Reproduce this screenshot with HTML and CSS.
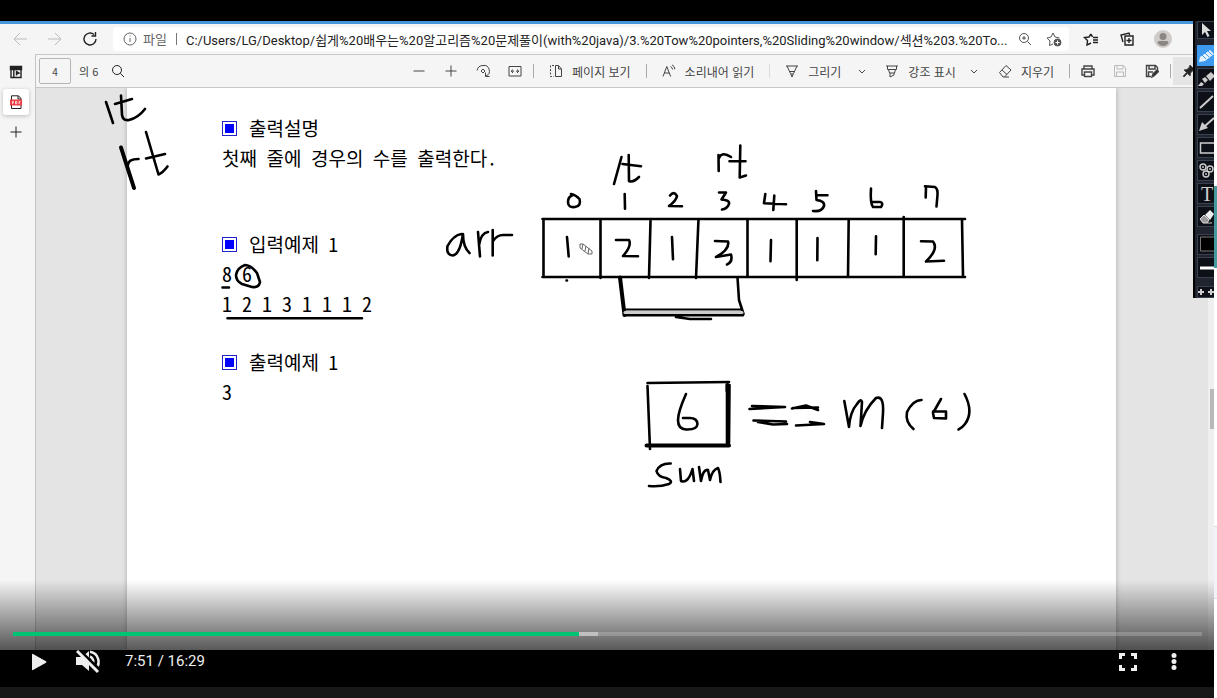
FILE: index.html
```html
<!DOCTYPE html>
<html lang="ko">
<head>
<meta charset="utf-8">
<meta name="viewport" content="width=device-width, initial-scale=1">
<title>강의 플레이어</title>
<link rel="stylesheet" href="styles.css">
</head>
<body>
<main class="layout">
  <section class="player">
    <div class="stage">
      <div class="letterbox"></div>
      <div class="browser">
        <header class="navbar">
          <button class="nav-btn faded" aria-label="뒤로"><svg viewBox="0 0 16 16"><path d="M15 8H2M8 2 2 8l6 6"/></svg></button>
          <button class="nav-btn faded" aria-label="앞으로"><svg viewBox="0 0 16 16"><path d="M1 8h13M8 2l6 6-6 6"/></svg></button>
          <button class="nav-btn" aria-label="새로 고침"><svg viewBox="0 0 16 16" class="bold"><path d="M14 8a6 6 0 1 1-2-4.500M13.500 1v4h-4"/></svg></button>
          <div class="address">
            <svg class="icon info" viewBox="0 0 16 16"><circle cx="8" cy="8" r="6"/><path d="M8 7v4M8 4.500v1"/></svg>
            <label class="scheme" for="url">파일</label>
            <span class="bar"></span>
            <input id="url" class="url" type="text" value="C:/Users/LG/Desktop/쉽게%20배우는%20알고리즘%20문제풀이(with%20java)/3.%20Tow%20pointers,%20Sliding%20window/섹션%203.%20To...">
            <button class="addr-btn" aria-label="확대"><svg viewBox="0 0 16 16"><circle cx="7" cy="7" r="4.500"/><path d="M10.500 10.500 14 14M7 5v4M5 7h4"/></svg></button>
            <button class="addr-btn" aria-label="즐겨찾기 추가"><svg viewBox="0 0 16 16"><path d="M7 13l-3.500 1.500.5-4.500L1 7l4-1 2-4 2 4 4.500 1"/><circle cx="11.500" cy="11.500" r="3.500" fill="#555"/><path d="M11.500 9.500v4M9.500 11.500h4" stroke="#fff"/></svg></button>
          </div>
          <button class="side-btn" aria-label="즐겨찾기"><svg viewBox="0 0 16 16" class="bold"><path d="M8 3 6 6 1.500 6.500l3 3-.5 4.500L8 12M8 3l1.500 3M10 6.500h5M10 9h5M10 11.500h5"/></svg></button>
          <button class="side-btn" aria-label="컬렉션"><svg viewBox="0 0 16 16" class="bold"><path d="M6 5h8v9H6zM10 7v5M7.500 9.500h5M4 11 2 4l8-2 .6 2"/></svg></button>
          <button class="side-btn avatar" aria-label="프로필"><svg viewBox="0 0 18 18"><circle cx="9" cy="9" r="9" fill="#cfcbc8" stroke="none"/><circle cx="9" cy="6.500" r="3.500" fill="#8b8784" stroke="none"/><path d="M3.500 13q0-2 2-2h7q2 0 2 2-2 3-5.500 3t-5.500-3z" fill="#8b8784" stroke="none"/></svg></button>
        </header>
        <div class="workspace">
          <nav class="tabs">
            <button class="tab" aria-label="탭 메뉴"><svg viewBox="0 0 14 14" class="bold"><path d="M2 3h10v9.500H2zM4.800 5v7"/><path d="M1.500 1.500h11v3h-11z" fill="#222"/><path d="M7.500 10.500V6.500l2.500 1.500-2.500 1"/></svg></button>
            <button class="tab current" aria-label="PDF 문서"><svg viewBox="0 0 14 14"><path d="M2.500 13.500V.8h7L12 3.500v10zM9 1v3h3" stroke="#222"/><path d="M1 4.500h12v6H1z" fill="#ee3f46" stroke="none"/><path d="M3.500 9V6.500h1v1.200h-1M6.500 6.300v2.500h1.300V6.300zM10 9V6.500h1.500M10 7.800h1" stroke="#fff" stroke-width=".7"/></svg></button>
            <button class="tab" aria-label="새 탭"><svg viewBox="0 0 14 14"><path d="M7 1.500v11M1.500 7h11"/></svg></button>
          </nav>
          <div class="viewer">
            <div class="toolbar">
              <div class="tool-start">
                <input class="page-no" type="text" value="4" aria-label="페이지">
                <span class="page-total">의 6</span>
                <button class="search" aria-label="찾기"><svg viewBox="0 0 14 14"><circle cx="6" cy="6" r="4.500"/><path d="M9.300 9.300 13 13"/></svg></button>
              </div>
              <div class="tool-zoom">
                <button class="tool" aria-label="축소"><svg viewBox="0 0 14 14"><path d="M1.500 7h11"/></svg></button>
                <button class="tool" aria-label="확대"><svg viewBox="0 0 14 14"><path d="M1.500 7h11M7 1.500v11"/></svg></button>
                <button class="tool" aria-label="회전"><svg viewBox="0 0 14 14"><path d="M1 6.500Q2 1.500 7 1.500a5.500 5.500 0 0 1 3 10.500M9.500 8.500v4h4M7 5 9 7 7 9 5 7z"/></svg></button>
                <button class="tool" aria-label="너비에 맞춤"><svg viewBox="0 0 14 14"><path d="M1 2.500h12v9.500H1zM3 7.200h3M5 5.500 3.200 7.200 5 9M11 7.200H8M9 5.500l1.800 1.700L9 9"/></svg></button>
              </div>
              <span class="divider"></span>
              <button class="tool-text"><svg viewBox="0 0 14 14"><path d="M6.500 1.500v11h6V5L9.500 1.500zM9.500 2v3h3"/><path d="M5 1.500H1.500v11H5" stroke-dasharray="2 1.500"/></svg>페이지 보기</button>
              <span class="divider"></span>
              <button class="tool-text"><svg viewBox="0 0 14 14"><path d="M1 12.500 4.800 2.500l3.800 10M2.300 9h5M8.500 2.500q2 1 2 3M10 .8q2.800 1.500 2.800 4.500"/></svg>소리내어 읽기</button>
              <span class="divider light"></span>
              <button class="tool-text"><svg viewBox="0 0 14 14"><path d="M1 2h12M2 2l3.500 7.500L7 13l1.500-3.500L12 2M4.500 7.500h5M6 10h2"/></svg>그리기</button>
              <button class="chevron" aria-label="그리기 옵션"><svg viewBox="0 0 8 8"><path d="M1 3l3 3 3-3"/></svg></button>
              <button class="tool-text tight"><svg viewBox="0 0 14 14"><path d="M1 2h12M2.500 2v3.500h9V2M3.500 5.500 4.500 9h5l1-3.500M5 9v4l4-2V9"/></svg>강조 표시</button>
              <button class="chevron" aria-label="강조 표시 옵션"><svg viewBox="0 0 8 8"><path d="M1 3l3 3 3-3"/></svg></button>
              <button class="tool-text"><svg viewBox="0 0 14 14"><path d="M1.500 8.500 8 1.500l5 4.500-6.500 7H5zM4 6l5 4.500M6.500 13H11"/></svg>지우기</button>
              <span class="divider"></span>
              <div class="tool-file">
                <button class="tool" aria-label="인쇄"><svg viewBox="0 0 14 14" class="bold"><path d="M3 5V2h8v3M3 11H1V5h12v6h-2M3.500 8h7v4.500h-7z"/></svg></button>
                <button class="tool faded" aria-label="저장"><svg viewBox="0 0 14 14"><path d="M1.500 1.500h9l2 2v9h-11zM4 1.500v3.500h6V1.500M3.500 12.500V8h7v4.500"/></svg></button>
                <button class="tool" aria-label="다른 이름으로 저장"><svg viewBox="0 0 14 14" class="bold"><path d="M6 12.500H1.500v-11h9l2 2V6M4 1.500v3.500h6V1.500M3.500 12V8H8"/><path d="M7 13l1-3 4-4 1.500 1.500-4 4z" fill="#222"/></svg></button>
              </div>
              <span class="divider"></span>
              <button class="pin" aria-label="도구 모음 고정"><svg viewBox="0 0 14 14"><path d="M8 1l5 5-2 .5-2.500 2.500L8 12 5.500 9.500 2 13l-.8-.8L4.500 8.500 2 6l3-.5L7.500 3z" fill="#222"/></svg></button>
            </div>
            <div class="canvas">
              <article class="paper">
                <section class="block first">
                  <h2 class="heading"><span class="mark"></span>출력설명</h2>
                  <p class="line">첫째 줄에 경우의 수를 출력한다.</p>
                </section>
                <section class="block">
                  <h2 class="heading"><span class="mark"></span>입력예제 1</h2>
                  <p class="line digits">8 6</p>
                  <p class="line digits">1 2 1 3 1 1 1 2</p>
                </section>
                <section class="block last">
                  <h2 class="heading"><span class="mark"></span>출력예제 1</h2>
                  <p class="line digits">3</p>
                </section>
              </article>
              <div class="scroll"><div class="thumb"></div></div>
            </div>
          </div>
        </div>
      </div>

      <svg class="ink" width="1214" height="650" viewBox="0 0 1214 650" role="img" aria-label="손글씨: lt, rt, arr 배열, sum == m(6)">
        <g class="pen">
          <path d="M106 102 113 123M115 104l17-5M121 95.500l1 19.500q1 6 7 5 9-2 16-11"/>
          <path class="thick" d="M121 147.500 134 188"/>
          <path d="M128 165q0-6 10.500-6"/>
          <path d="M146 132l12.500 42.500q4-1.500 9-8M146 158.500l19-4.500"/>
          <path d="M461.500 234q-8 1-14 12-1.500 9 5.500 9.500 7-1.500 10-21.500 0 13 6.500 19M478 232l2 24.500M479 245q2-12 9-13M492.700 230v25.500M493 241q4-6 10-6h9"/>
          <path d="M222.500 287.500h6.500M236 275q1-7 9-10 6 0 12 8l3 9q-1 6-8 5l-10-3q-6-3-6-9zM227.500 318.300H362"/>
          <path d="M621.500 157 614 184M628.700 155l.3 26q4 2 10-4M622.500 164l18.500 2.300"/>
          <path d="M718.700 171l-.2-16M719 158q3-7 12-1M740.300 145.500l-.6 32 6.300-2M729.500 161.300h16"/>
          <path d="M571 194q5 1 8.500 5 2 7-4.500 8-7 1-7-5 0-5 4-6.500M624.700 194l.3 14.700M670 195.500q4-5 7 .5-1 5-8 10l13 .3M719 192.500h7l-4.500 7q8.500.5 7.500 4.500-2 5-7 5.500"/>
          <path d="M765.300 194l-1.300 9.300 22 1M774.300 195.500l-1 14.500M816 191l.5 9q8.500 1 7.500 6-2 6-11 5M817 195l10.500.3M871 188.500q-1 14.500 2 18.500h8q3-4-1-5h-8M926 187l-.3 10.500M925 186.300l10 .7q3 2 2.500 8l-1 11.500"/>
          <path d="M542.500 219H965M542.500 277H965M543.500 219v58M600.500 219v59M650.500 221l-1.500 57M698.500 219l-2.500 59M747.500 219v58M796.700 219v61M848.700 219l-.7 58M903.700 217v60M962 220l1 56"/>
          <path d="M567 237l1.700 19.500M616 240h13q3 6-6 16l15 .3M672 237l1 22.300M715 241l13 .5q2 7.500-12 15.500l15-2.500q2 7.500-4 10M771 240l-.5 21.300M817.500 238l-.2 22.300M876 236.300l-.3 18M921 241.300l12 .2q6 7.500-7 20l18-.8M566.500 280.500h.5"/>
          <path class="thick" d="M620 277.500l4.500 37.500"/>
          <path d="M737.500 277.500l1.500 22.500 4.500 14"/>
          <path class="tone" d="M625 312.500h117"/>
          <path class="thin" d="M624 309.500h118"/>
          <path d="M624 315.300h119M676 317l14 2h21"/>
          <path d="M647.500 383 729 382M647.500 386l2.500 63M727 384v61M729.500 385l-.5 58"/>
          <path class="thick" d="M646.500 445.500H729M727.500 385v6"/>
          <path d="M686 394q-8 18-8 26 0 9 8 9.500 11 .5 11.500-5.500-.5-6-7.500-6h-7"/>
          <path d="M749.500 409l35.500-2-33-1M753.500 420.500l32.500 1M758 422l15 2.500 14-.5M792 408.500l14-3 12 4.500M793 408l25-.5M796 425.500l28-1.500-14-2"/>
          <path d="M844.300 401l4.700 26q1-15 8-23 4-6 5-2l-1.500 24q3.500-16 15.500-28 8-3 7 15l-1 15M921.500 400q-8.500 0-14.500 12-2 10 6.500 17M941 399l-8 14 1 5 12 .5v-7h-13M964.500 394q9.500 18 .5 30-3 4-6.500 5.500"/>
          <path d="M670.700 463.500q-10.700-.5-14.200 7.500 1.500 6 9.500 7 8 3 3 6-9 3-20 2M680 469l1 12q7 3 11.500-12l1.500 12M699 467l2 14q2-12 7-11l2 10q2-10 8-12 2 4 2.500 14"/>
        </g>
        <g class="cursor"><path d="M580 244l3 0 9 7v3l-4 0-8-6zM583 244l-1 5M586 246l-1 5M589 248l-1 6"/></g>
      </svg>

      <aside class="palette" aria-label="그리기 도구">
        <button class="pal first" aria-label="선택"><svg viewBox="0 0 20 20"><path d="M5 3v12l3-3 2.500 5 2-1-2.500-5h4z" fill="#ddd" stroke="none"/></svg></button>
        <button class="pal active" aria-label="펜"><svg viewBox="0 0 20 20"><path d="M2 16 3 11l10-7 4 4-9 7z" fill="#e6f2ff" stroke="none"/><path d="M5 9l4 4M8 7l4 4M11 5l4 4" stroke="#3d9aee"/></svg></button>
        <button class="pal" aria-label="형광펜"><svg viewBox="0 0 20 20"><path d="M9 7l5-4 4 4-5 5zM5 10l3-2 3 3-3 3zM1 17l3-4 3 2-2 2z" fill="#ccc" stroke="none"/></svg></button>
        <button class="pal" aria-label="선"><svg viewBox="0 0 20 20"><path d="M3 16 16 4" stroke-width="2"/></svg></button>
        <button class="pal" aria-label="화살표"><svg viewBox="0 0 20 20"><path d="M8 11l9-8" stroke-width="2"/><path d="M2 16 5 7l6 6z" fill="#ccc" stroke="none"/></svg></button>
        <button class="pal" aria-label="사각형"><svg viewBox="0 0 20 20"><path d="M3.500 5h16v10h-16z" stroke-width="1.500"/></svg></button>
        <button class="pal" aria-label="도형"><svg viewBox="0 0 20 20" class="bold"><circle cx="6" cy="6" r="3"/><circle cx="13" cy="8" r="3"/><circle cx="9" cy="13" r="3"/><path d="M6 5v2M13 7v2M9 12v2"/></svg></button>
        <button class="pal type">T</button>
        <button class="pal" aria-label="지우개"><svg viewBox="0 0 20 20"><path d="M8 8l5-5 4 4-4 6z" fill="#eee" stroke="none"/><path d="M3 12l4-4 5 5-2 3H6z" fill="#999" stroke="#ddd"/><path d="M10 16h5"/></svg></button>
        <button class="pal gap" aria-label="색"><svg viewBox="0 0 20 20"><path d="M3.500 2h18v14h-18z" fill="#000" stroke="#777"/></svg></button>
        <button class="pal" aria-label="굵기"><svg viewBox="0 0 20 20"><path d="M3 10h17" stroke="#fff" stroke-width="3"/></svg></button>
        <button class="pal foot" aria-label="이동"><svg viewBox="0 0 20 12"><path d="M1 6h6M4 3v6M11 6h6M14 3v6" stroke-width="2"/></svg></button>
      </aside>

      <div class="shade">
        <input class="progress" type="range" min="0" max="989" value="471" aria-label="재생 위치">
      </div>
    </div>

    <div class="controls">
      <button class="ctl play" aria-label="재생"><svg viewBox="0 0 24 24"><path d="M5 4.500q0-1 1-.5l13 7.300q1 .7 0 1.400L6 20q-1 .5-1-.5z"/></svg></button>
      <button class="ctl mute" aria-label="음소거 해제"><svg viewBox="0 0 24 24"><path d="M0 7h6l7-6v20l-7-6H0z"/><path d="M14 1.800a10 10 0 0 1 5 17.500M14 6.500a5 5 0 0 1 2 8" fill="none" stroke="#eee" stroke-width="2.500"/><path d="M3 0l22 21" stroke="#000" stroke-width="3"/><path d="M1 1l21 21" stroke="#eee" stroke-width="3"/></svg></button>
      <span class="time">7:51 / 16:29</span>
      <button class="ctl full" aria-label="전체 화면"><svg viewBox="0 0 20 20"><path d="M2.500 7V2.500H7M13 2.500h4.500V7M17.500 13v4.500H13M7 17.500H2.500V13" fill="none" stroke="#eee" stroke-width="3"/></svg></button>
      <button class="ctl more" aria-label="더 보기"><svg viewBox="0 0 20 20"><circle cx="10" cy="3.500" r="2.500"/><circle cx="10" cy="9.500" r="2.500"/><circle cx="10" cy="15.500" r="2.500"/></svg></button>
    </div>
    <div class="base"></div>
  </section>
  <aside class="edge"><div class="edge-tab"></div><div class="edge-block"></div></aside>
</main>
</body>
</html>
```
FILE: styles.css
```css
* { box-sizing: border-box; }
body { margin: 0; background: #fff; font-family: "Noto Sans", "Noto Sans CJK KR", sans-serif; color: #222; }
button, input { font: inherit; color: inherit; border: 0; background: none; padding: 0; margin: 0; }
button { display: flex; align-items: center; justify-content: center; flex: none; }
svg { fill: none; stroke: currentColor; stroke-width: 1; flex: none; }
.bold { stroke-width: 1.4; }
.faded { color: #bbb; }

.layout { display: flex; min-height: 100vh; }
.player { flex: 1; min-width: 0; display: flex; flex-direction: column; background: #000; }
.stage { flex: 1; position: relative; display: flex; flex-direction: column; overflow: hidden; }
.letterbox { height: 21px; background: #000; }
.browser { flex: 1; display: flex; flex-direction: column; background: #f5f5f5; border-top: 3px solid #4596dc; }

.navbar { display: flex; align-items: center; height: 30px; padding-left: 2px; }
.nav-btn { width: 35px; height: 28px; }
.nav-btn svg { width: 16px; height: 16px; }
.address { flex: 1; min-width: 0; display: flex; align-items: center; height: 24px; margin-left: 6px; background: #fff; border-radius: 4px; padding: 0 1px 0 9px; color: #666; }
.icon { width: 16px; height: 16px; }
.scheme { font-size: 13px; line-height: 20px; margin-left: 5px; white-space: nowrap; }
.bar { width: 1px; height: 12px; background: #777; margin: 0 9px; }
.url { flex: 1; min-width: 0; height: 22px; font-family: Roboto, "Noto Sans CJK KR", sans-serif; font-size: 13px; color: #222; }
.addr-btn { width: 29px; height: 22px; color: #555; }
.addr-btn svg { width: 16px; height: 16px; }
.side-btn { width: 36px; height: 28px; }
.side-btn svg { width: 16px; height: 16px; }
.side-btn:nth-of-type(4) { margin-left: 4px; }
.avatar { margin-right: 33px; }
.avatar svg { width: 18px; height: 18px; }

.workspace { flex: 1; display: flex; }
.tabs { width: 36px; flex: none; padding: 5px 0 0 3px; display: flex; flex-direction: column; gap: 4px; border-right: 1px solid #c4c4c4; }
.tab { width: 26px; height: 26px; border-radius: 3px; }
.tab svg { width: 14px; height: 14px; }
.tab.current { background: #fff; box-shadow: 0 1px 4px #bbb; }
.viewer { flex: 1; min-width: 0; display: flex; flex-direction: column; }
.toolbar { display: flex; align-items: center; height: 34px; border-top: 1px solid #c8c8c8; border-bottom: 1px solid #c8c8c8; font-size: 12px; color: #444; overflow: hidden; font-family: "Noto Sans CJK KR", sans-serif; }
.tool-start { display: flex; align-items: center; flex: 1; }
.page-no { width: 32px; height: 26px; margin-left: 3px; border: 1px solid #b5b5b5; border-radius: 2px; text-align: center; font-size: 10px; }
.page-total { margin-left: 8px; font-size: 11px; }
.search { width: 14px; height: 26px; margin-left: 13px; color: #222; }
.search svg { width: 14px; height: 14px; }
.tool-zoom, .tool-file { display: flex; flex: none; }
.tool { width: 32px; height: 28px; }
.tool svg, .tool-text svg { width: 14px; height: 14px; }
.divider { flex: none; width: 1px; height: 14px; margin: 0 2px; background: #aaa; }
.divider.light { background: #ddd; }
.tool-text { gap: 9px; padding: 0 13px; white-space: nowrap; height: 28px; }
.tool-text.tight { padding: 0 10px 0 12px; }
.chevron { width: 16px; height: 28px; margin-right: 3px; }
.chevron svg { width: 8px; height: 8px; }
.pin { width: 41px; height: 28px; justify-content: flex-start; padding-left: 9px; background: #e5e5e5; }
.pin svg { width: 14px; height: 14px; }

.canvas { flex: 1; display: flex; background: #e4e4e4; }
.paper { flex: 1; margin: 0 92px 0 91px; padding: 25px 95px 0; background: #fff; box-shadow: 0 0 5px #aaa; clip-path: inset(0 -8px); font-family: "Noto Sans Mono CJK KR", "Noto Sans CJK KR", monospace; color: #000; }
.block { padding-bottom: 57px; }
.block + .block { padding-bottom: 28px; }
.heading, .line { margin: 0; font-size: 19px; line-height: 30px; font-weight: 500; white-space: nowrap; }
.heading { display: flex; align-items: center; gap: 12px; }
.line { line-height: 29px; }
.mark { width: 15px; height: 15px; border: 1px solid #22c; background: #00f; box-shadow: inset 0 0 0 2px #fff; }
.digits { font-size: 20px; font-weight: 400; line-height: 30px; }
.scroll { width: 6px; background: #efefef; }
.thumb { height: 40px; margin: 301px 0 0 2px; background: #b9b9b9; }

.ink { position: absolute; left: 0; top: 0; pointer-events: none; }
.pen { stroke: #000; stroke-width: 2.6; stroke-linecap: round; stroke-linejoin: round; }
.pen .thick { stroke-width: 4; }
.pen .thin { stroke-width: 2; }
.pen .tone { stroke: #ccc; stroke-width: 3; }
.cursor { stroke: #666; }

.palette { position: absolute; right: 0; top: 21px; width: 21px; height: 277px; overflow: hidden; background: #20242e; border-left: 2px solid #000; padding-left: 2px; display: flex; flex-direction: column; gap: 2px; color: #ccc; }
.pal { width: 20px; height: 21px; background: #0d1016; border: 1px solid #3b4050; }
.pal svg { width: 20px; height: 20px; }
.pal.first { height: 18px; margin-bottom: 4px; }
.pal.active { background: #3d9aee; border-color: #3d9aee; }
.pal.type { font-family: "Liberation Serif", serif; font-size: 20px; line-height: 20px; }
.pal.gap { margin-top: 5px; }
.pal.foot { height: 12px; margin-top: 6px; }
.pal.foot svg { height: 12px; }

.shade { position: absolute; left: 0; right: 0; bottom: 0; height: 70px; padding: 0 12px 14px 13px; display: flex; align-items: flex-end; background: linear-gradient(rgba(0,0,0,0), rgba(0,0,0,.65)); }
.progress { appearance: none; flex: 1; min-width: 0; height: 4px; background: linear-gradient(90deg, #00c471 47.6%, rgba(255,255,255,.5) 47.6% 49.2%, rgba(255,255,255,.2) 49.2%); }
.progress::-webkit-slider-thumb { appearance: none; width: 0; height: 0; }

.controls { height: 37px; display: flex; align-items: flex-start; padding: 0 28px 0 27px; background: #000; color: #eee; font-family: Roboto, sans-serif; }
.ctl { width: 24px; height: 24px; }
.ctl svg { width: 24px; height: 24px; fill: #eee; stroke: none; }
.ctl.mute { margin-left: 25px; }
.ctl.full svg, .ctl.more svg { width: 20px; height: 20px; }
.time { flex: 1; margin-left: 25px; font-size: 15px; line-height: 22px; }
.more { margin-left: 22px; }
.base { height: 11px; background: #181818; }

.edge { width: 3px; flex: none; position: relative; background: #fff; }
.edge-tab { position: absolute; top: 186px; right: 0; width: 3px; height: 82px; background: #459aa0; }
.edge-block { position: absolute; top: 526px; right: 0; width: 3px; height: 73px; background: #f1f3f8; border: solid #d8dce2; border-width: 1px 0; }
```
